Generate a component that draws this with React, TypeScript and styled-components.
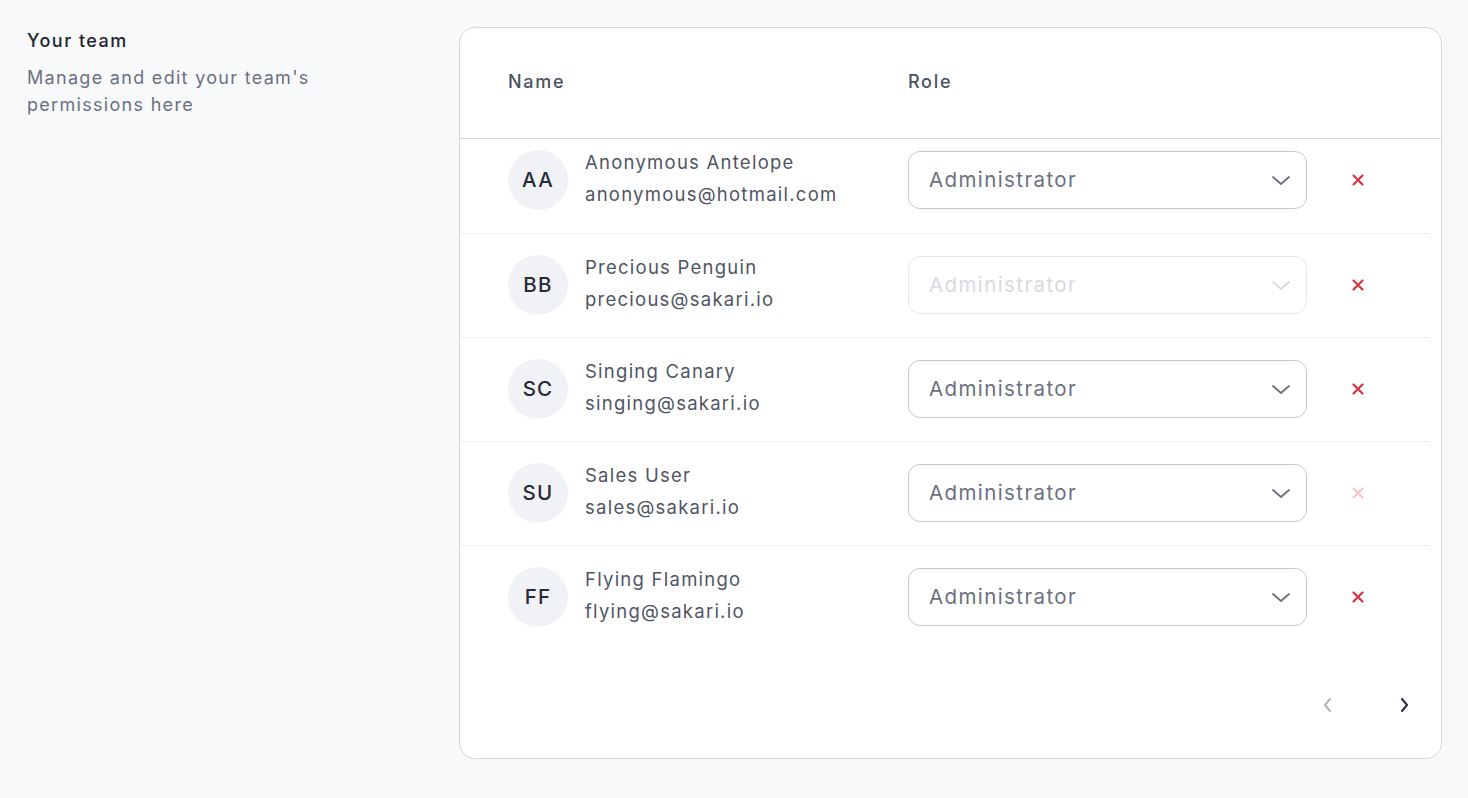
import React from 'react';
import styled, { createGlobalStyle } from 'styled-components';

const GlobalStyle = createGlobalStyle`
  html, body {
    margin: 0;
    padding: 0;
    background: #f8f9fb;
    font-family: Inter, "Noto Sans", sans-serif;
  }
`;

const Page = styled.div`
  display: grid;
  grid-template-columns: 432px 983px;
  padding: 27px 0 0 27px;
  height: 798px;
  box-sizing: border-box;
`;

const Intro = styled.div`
  padding-top: 3px;
`;

const Title = styled.h2`
  margin: 0 0 12px;
  font-size: 18px;
  font-weight: 500;
  color: #1f2330;
  line-height: 22px;
  letter-spacing: 1.5px;
`;

const Description = styled.p`
  margin: 0;
  font-size: 18px;
  line-height: 27px;
  color: #6b7181;
  letter-spacing: 1.3px;
  width: 320px;
`;

const Card = styled.section`
  background: #fff;
  border: 1.5px solid #d6d8de;
  border-radius: 16px;
  height: 732px;
  box-sizing: border-box;
  display: flex;
  flex-direction: column;
  overflow: hidden;
`;

const HeaderRow = styled.div`
  display: grid;
  grid-template-columns: 400px 400px;
  align-items: center;
  height: 111px;
  box-sizing: border-box;
  padding: 0 0 4px 48px;
  border-bottom: 1.5px solid #d6d8de;
  font-size: 18px;
  font-weight: 500;
  color: #4b5263;
  letter-spacing: 1.7px;
`;

const Body = styled.div`
  margin-right: 11px;
`;

const Row = styled.div<{ $first?: boolean }>`
  display: grid;
  grid-template-columns: 400px 399px 1fr;
  align-items: center;
  padding: ${p => (p.$first ? '10.5px 0 23px' : '21px 0 22px')} 48px;
  border-bottom: 1px solid #eceef2;
  &:last-child {
    border-bottom: none;
  }
`;

const Person = styled.div`
  display: flex;
  align-items: center;
  gap: 17px;
`;

const Avatar = styled.div`
  width: 60px;
  height: 60px;
  border-radius: 50%;
  background: #f1f2f6;
  display: flex;
  align-items: center;
  justify-content: center;
  font-size: 20.5px;
  font-weight: 500;
  color: #272b38;
  letter-spacing: 1.2px;
`;

const Info = styled.div`
  display: flex;
  flex-direction: column;
  gap: 9px;
  font-size: 18.5px;
  line-height: 23px;
  color: #4f5565;
  letter-spacing: 1.25px;
  margin-top: -2px;
`;

const Select = styled.div<{ $disabled?: boolean }>`
  height: 58px;
  box-sizing: border-box;
  border: 1.5px solid ${p => (p.$disabled ? '#e6e8ec' : '#c6c9d1')};
  border-radius: 12px;
  display: flex;
  align-items: center;
  justify-content: space-between;
  padding: 0 13px 0 20px;
  font-size: 20.5px;
  color: ${p => (p.$disabled ? '#d7dae1' : '#6a7080')};
  letter-spacing: 1.4px;
`;

const Remove = styled.button<{ $disabled?: boolean }>`
  border: none;
  background: none;
  padding: 0;
  margin-left: 44px;
  width: 14px;
  height: 14px;
  display: flex;
  color: ${p => (p.$disabled ? '#f5c6c9' : '#d9343f')};
  cursor: pointer;
`;

const Pager = styled.div`
  margin-top: auto;
  display: flex;
  justify-content: flex-end;
  gap: 62px;
  padding: 0 30px 43px 0;
`;

const PageButton = styled.button<{ $active?: boolean }>`
  border: none;
  background: none;
  padding: 0;
  width: 14px;
  height: 20px;
  display: flex;
  align-items: center;
  justify-content: center;
  color: ${p => (p.$active ? '#272b38' : '#b3b6be')};
`;

const Chevron = () => (
  <svg width="24" height="22" viewBox="0 0 24 22" fill="none" stroke="currentColor" strokeWidth="1.8" strokeLinecap="round" strokeLinejoin="round">
    <path d="M4 8l8 7 8-7" />
  </svg>
);

const Cross = () => (
  <svg width="14" height="14" viewBox="0 0 14 14" fill="none" stroke="currentColor" strokeWidth="2.2" strokeLinecap="round">
    <path d="M2.5 2.5l9 9M11.5 2.5l-9 9" />
  </svg>
);

const ArrowLeft = () => (
  <svg width="10" height="16" viewBox="0 0 10 16" fill="none" stroke="currentColor" strokeWidth="2" strokeLinecap="round" strokeLinejoin="round">
    <path d="M7 2L2 8l5 6" />
  </svg>
);

const ArrowRight = () => (
  <svg width="10" height="16" viewBox="0 0 10 16" fill="none" stroke="currentColor" strokeWidth="2" strokeLinecap="round" strokeLinejoin="round">
    <path d="M3 2l5 6-5 6" />
  </svg>
);

type Member = {
  initials: string;
  name: string;
  email: string;
  roleDisabled?: boolean;
  removeDisabled?: boolean;
};

const members: Member[] = [
  { initials: 'AA', name: 'Anonymous Antelope', email: 'anonymous@hotmail.com' },
  { initials: 'BB', name: 'Precious Penguin', email: 'precious@sakari.io', roleDisabled: true },
  { initials: 'SC', name: 'Singing Canary', email: 'singing@sakari.io' },
  { initials: 'SU', name: 'Sales User', email: 'sales@sakari.io', removeDisabled: true },
  { initials: 'FF', name: 'Flying Flamingo', email: 'flying@sakari.io' },
];

const App: React.FC = () => {
  return (
    <>
      <GlobalStyle />
      <Page>
        <Intro>
          <Title>Your team</Title>
          <Description>Manage and edit your team's permissions here</Description>
        </Intro>
        <Card>
          <HeaderRow>
            <span>Name</span>
            <span>Role</span>
          </HeaderRow>
          <Body>
            {members.map((m, i) => (
              <Row key={m.initials} $first={i === 0}>
                <Person>
                  <Avatar>{m.initials}</Avatar>
                  <Info>
                    <span>{m.name}</span>
                    <span>{m.email}</span>
                  </Info>
                </Person>
                <Select $disabled={m.roleDisabled}>
                  Administrator
                  <Chevron />
                </Select>
                <Remove $disabled={m.removeDisabled} aria-label="Remove">
                  <Cross />
                </Remove>
              </Row>
            ))}
          </Body>
          <Pager>
            <PageButton aria-label="Previous page">
              <ArrowLeft />
            </PageButton>
            <PageButton $active aria-label="Next page">
              <ArrowRight />
            </PageButton>
          </Pager>
        </Card>
      </Page>
    </>
  );
};

export default App;
